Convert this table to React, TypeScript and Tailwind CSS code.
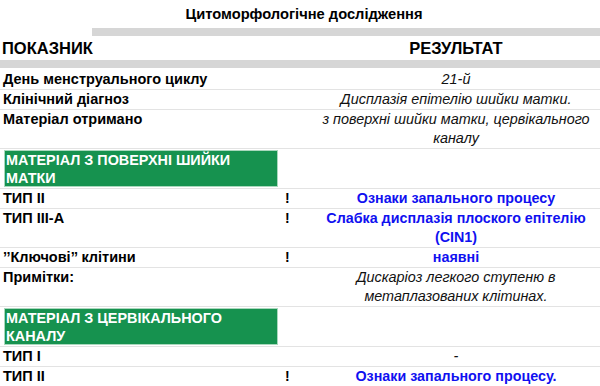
import React from 'react';

type Row = {
  label: string;
  mark?: boolean;
  result?: string;
  kind?: 'italic' | 'blue';
};

const Section = ({ title }: { title: React.ReactNode }) => (
  <div className="grid grid-cols-[278px_22px_312px] border-b border-[#e3e3e3]">
    <div className="pl-[4px] py-[1px]">
      <div className="bg-[#16924f] border border-[#a9d8bd] text-white font-bold text-[14.4px] leading-[18px] pl-[1px] h-[37px]">
        {title}
      </div>
    </div>
    <div />
    <div />
  </div>
);

const DataRow = ({ label, mark, result, kind = 'italic' }: Row) => (
  <div className="grid grid-cols-[278px_22px_312px] border-b border-[#e3e3e3] text-[14px] leading-[19px]">
    <div className="pl-[3px] font-bold text-black text-[14.5px]">{label}</div>
    <div className="pl-[7px] font-bold text-black">{mark ? '!' : ''}</div>
    <div
      className={
        kind === 'blue'
          ? 'px-[10px] text-center font-bold text-[#1010f0] text-[14.3px]'
          : 'px-[2px] text-center italic text-[#111] text-[14.4px]'
      }
    >
      {result}
    </div>
  </div>
);

export default function App() {
  return (
    <div className="w-[600px] h-[386px] bg-white overflow-hidden font-['Liberation_Sans',Arial,sans-serif]">
      <div className="h-[28px] flex items-center justify-center pl-[8px] font-bold text-[14.7px] text-black">
        Цитоморфологічне дослідження
      </div>
      <div className="h-[8px] ml-[92px] bg-[#d6d6d6]" />
      <div className="h-[24px] grid grid-cols-[312px_1fr] items-center font-bold text-[16.5px] text-black">
        <div className="pl-[2px]">ПОКАЗНИК</div>
        <div className="text-center">РЕЗУЛЬТАТ</div>
      </div>
      <div className="h-[8px] bg-[#d6d6d6]" />
      <div className="h-[2px]" />

      <DataRow label="День менструального циклу" result="21-й" />
      <DataRow label="Клінічний діагноз" result="Дисплазія епітелію шийки матки." />
      <DataRow label="Матеріал отримано" result="з поверхні шийки матки, цервікального каналу" />

      <Section title={<>МАТЕРІАЛ З ПОВЕРХНІ ШИЙКИ<br />МАТКИ</>} />

      <DataRow label="ТИП II" mark result="Ознаки запального процесу" kind="blue" />
      <DataRow label="ТИП III-А" mark result="Слабка дисплазія плоского епітелію (CIN1)" kind="blue" />
      <DataRow label="’’Ключові’’ клітини" mark result="наявні" kind="blue" />
      <DataRow label="Примітки:" result="Дискаріоз легкого ступеню в метаплазованих клітинах." />

      <Section title={<>МАТЕРІАЛ З ЦЕРВІКАЛЬНОГО<br />КАНАЛУ</>} />

      <DataRow label="ТИП I" result="-" />
      <DataRow label="ТИП II" mark result="Ознаки запального процесу." kind="blue" />
    </div>
  );
}
